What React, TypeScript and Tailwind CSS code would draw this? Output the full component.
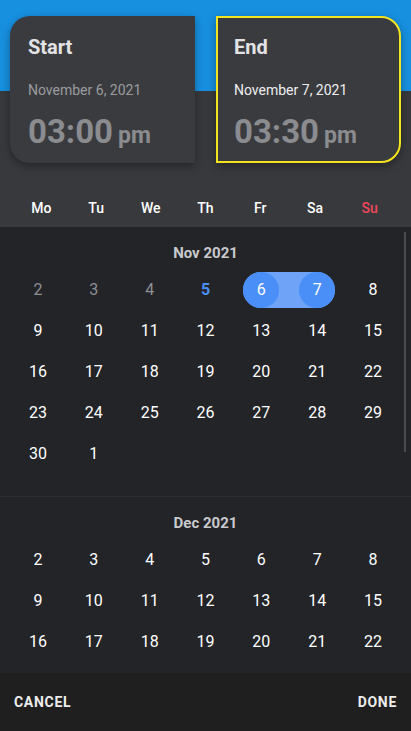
import React from "react";

type Day = { n: number; kind?: "past" | "today" | "start" | "end" };

const nov: Day[][] = [
  [{ n: 2, kind: "past" }, { n: 3, kind: "past" }, { n: 4, kind: "past" }, { n: 5, kind: "today" }, { n: 6, kind: "start" }, { n: 7, kind: "end" }, { n: 8 }],
  [9, 10, 11, 12, 13, 14, 15].map((n) => ({ n })),
  [16, 17, 18, 19, 20, 21, 22].map((n) => ({ n })),
  [23, 24, 25, 26, 27, 28, 29].map((n) => ({ n })),
  [30, 1].map((n) => ({ n })),
];

const dec: Day[][] = [
  [2, 3, 4, 5, 6, 7, 8].map((n) => ({ n })),
  [9, 10, 11, 12, 13, 14, 15].map((n) => ({ n })),
  [16, 17, 18, 19, 20, 21, 22].map((n) => ({ n })),
  [23, 24, 25, 26, 27, 28, 29].map((n) => ({ n })),
  [30, 31, 1, 2, 3, 4, 5].map((n) => ({ n })),
];

function Cell({ d }: { d: Day }) {
  if (d.kind === "start" || d.kind === "end") {
    const isStart = d.kind === "start";
    return (
      <div className="relative flex h-[41px] items-center justify-center">
        <div
          className={
            isStart
              ? "absolute left-[10px] right-0 top-[3px] h-[36px] rounded-l-full bg-[#6ea3f8]"
              : "absolute left-0 right-[10px] top-[3px] h-[36px] rounded-r-full bg-[#6ea3f8]"
          }
        />
        <div className="relative flex h-[36px] w-[36px] items-center justify-center rounded-full bg-[#4a8ef7] text-[16px] text-white">
          {d.n}
        </div>
      </div>
    );
  }
  const cls =
    d.kind === "past"
      ? "text-[#8e8f93]"
      : d.kind === "today"
      ? "font-bold text-[#4b8df8]"
      : "text-white";
  return (
    <div className={`flex h-[41px] items-center justify-center text-[16px] ${cls}`}>{d.n}</div>
  );
}

function Month({ title, rows }: { title: string; rows: Day[][] }) {
  return (
    <div className="border-b border-[#2c2d31] pb-[22px] pt-[14px]">
      <div className="mb-[4px] flex h-[24px] items-center justify-center text-[15px] font-bold text-[#c9cacd]">
        {title}
      </div>
      <div className="flex flex-col px-[10px]">
        {rows.map((r, i) => (
          <div key={i} className="grid grid-cols-7">
            {r.map((d, j) => (
              <Cell key={j} d={d} />
            ))}
          </div>
        ))}
      </div>
    </div>
  );
}

export default function App() {
  return (
    <div
      className="flex h-[731px] w-[411px] flex-col overflow-hidden bg-[#232428]"
      style={{ fontFamily: "Roboto, 'Noto Sans', sans-serif" }}
    >
      <div className="bg-[linear-gradient(to_bottom,#1790e0_91px,#38393d_91px)]">
        <div className="flex gap-[21px] px-[10px] pt-[16px]">
          <div className="h-[147px] w-[185px] rounded-l-[20px] bg-[#3a3b3f] pl-[18px] pt-[18px] shadow-[0_3px_8px_rgba(0,0,0,0.35)]">
            <div className="text-[20px] font-bold leading-[26px] text-[#e3e3e5]">Start</div>
            <div className="mt-[21px] text-[14px] leading-[18px] text-[#9a9b9f]">November 6, 2021</div>
            <div className="mt-[13px] flex items-baseline text-[#8b8c90]">
              <span className="text-[33px] font-bold leading-[40px]">03:00</span>
              <span className="ml-[5px] text-[23px] font-bold">pm</span>
            </div>
          </div>
          <div className="h-[147px] w-[185px] rounded-r-[20px] border-2 border-[#f4e31f] bg-[#3a3b3f] pl-[16px] pt-[16px] shadow-[0_3px_8px_rgba(0,0,0,0.35)]">
            <div className="text-[20px] font-bold leading-[26px] text-[#e3e3e5]">End</div>
            <div className="mt-[21px] text-[14px] leading-[18px] text-[#eeeef0]">November 7, 2021</div>
            <div className="mt-[13px] flex items-baseline text-[#8b8c90]">
              <span className="text-[33px] font-bold leading-[40px]">03:30</span>
              <span className="ml-[5px] text-[23px] font-bold">pm</span>
            </div>
          </div>
        </div>
        <div className="mt-[27px] grid h-[37px] grid-cols-7 px-[14px] text-[14px] font-medium">
          {["Mo", "Tu", "We", "Th", "Fr", "Sa", "Su"].map((w) => (
            <div
              key={w}
              className={`flex items-center justify-center ${w === "Su" ? "text-[#f2485a]" : "text-white"}`}
            >
              {w}
            </div>
          ))}
        </div>
      </div>
      <div className="relative flex-1 overflow-hidden">
        <Month title="Nov 2021" rows={nov} />
        <Month title="Dec 2021" rows={dec} />
        <div className="absolute right-[5px] top-[5px] h-[220px] w-[2px] bg-[#4b4c50]" />
      </div>
      <div className="flex h-[58px] items-center justify-between bg-[#1f1f1f] px-[14px] text-[14px] font-bold tracking-[0.7px] text-[#ededed]">
        <span>CANCEL</span>
        <span>DONE</span>
      </div>
    </div>
  );
}
